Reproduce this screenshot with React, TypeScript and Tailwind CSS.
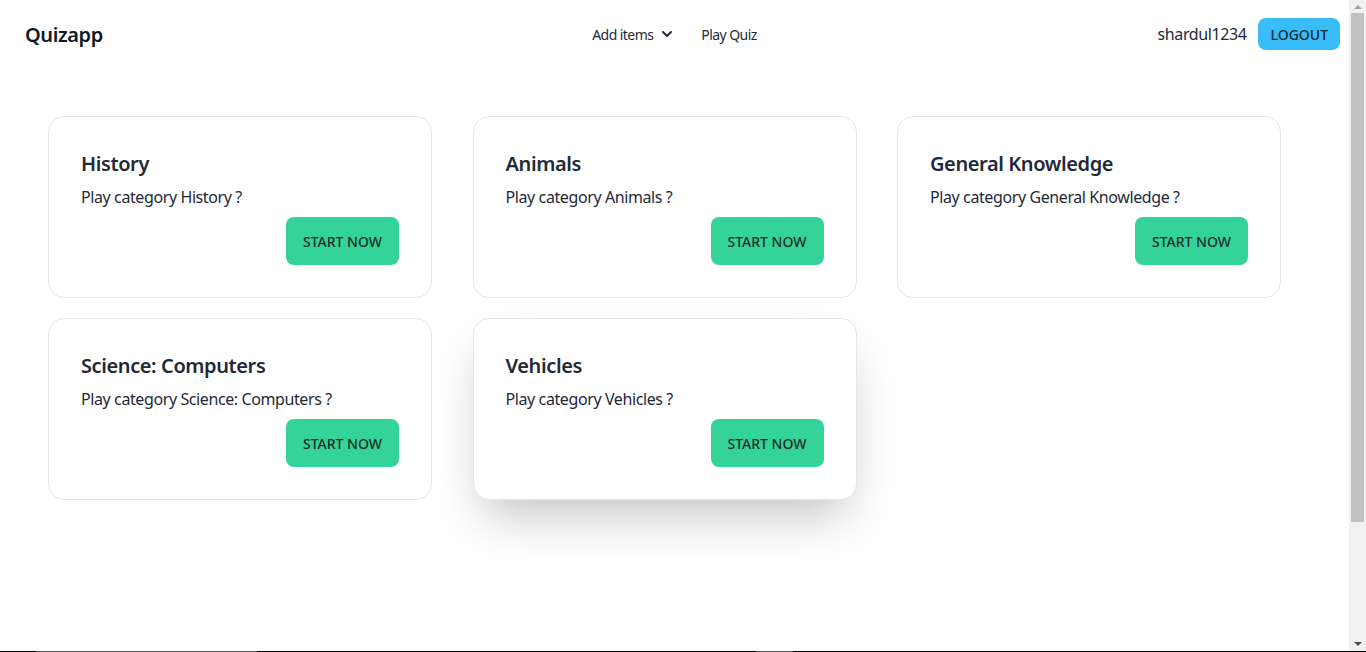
import { HiChevronDown } from 'react-icons/hi';

const categories = ['History', 'Animals', 'General Knowledge', 'Science: Computers', 'Vehicles'];

const CategoryCard = ({ name, raised }: { name: string; raised?: boolean }) => {
  return (
    <div
      className={
        'w-[384px] h-[182px] rounded-2xl border border-[#e5e6e6] bg-white px-8 pt-[33px] flex flex-col ' +
        (raised ? 'shadow-[0_25px_50px_-12px_rgba(0,0,0,0.25)]' : '')
      }
    >
      <h2 className="text-[20px] leading-7 font-semibold text-[#1f2937]">{name}</h2>
      <p className="mt-[7px] text-[16px] leading-6 text-[#1f2937]">Play category {name} ?</p>
      <div className="flex justify-end mt-2">
        <button className="h-12 px-[17px] rounded-lg bg-[#34d399] text-[14px] font-medium uppercase text-[#1a2e26] tracking-normal">
          Start now
        </button>
      </div>
    </div>
  );
};

const Scrollbar = () => (
  <aside className="w-[17px] bg-[#f1f1f1] flex flex-col items-center">
    <div className="h-[13px] flex items-center justify-center">
      <div className="w-0 h-0 border-x-[4px] border-x-transparent border-b-[4px] border-b-[#a3a3a3]" />
    </div>
    <div className="w-[13px] h-[509px] bg-[#c1c1c1] ml-[2px] mr-[2px]" />
    <div className="flex-1" />
    <div className="h-[14px] flex items-center justify-center">
      <div className="w-0 h-0 border-x-[4px] border-x-transparent border-t-[4px] border-t-[#505050]" />
    </div>
  </aside>
);

export default function App() {
  return (
    <div className="h-[652px] overflow-hidden flex flex-col bg-white font-['Noto_Sans',sans-serif] tracking-[-0.025em] text-[#1f2937]">
      <div className="flex-1 flex min-h-0">
        <main className="flex-1">
          <nav className="h-[68px] grid grid-cols-[1fr_auto_1fr] items-center px-[9px]">
            <a className="ml-[16px] text-[20px] font-semibold text-[#111827] pt-[2px]">Quizapp</a>
            <ul className="flex items-center gap-[24px] text-[14px] tracking-[-0.04em]">
              <li className="flex items-center gap-[4px]">
                Add items
                <HiChevronDown className="w-5 h-5" />
              </li>
              <li>Play Quiz</li>
            </ul>
            <div className="flex items-center justify-end gap-3">
              <span className="text-[16px]">shardul1234</span>
              <button className="h-8 px-3 rounded-lg bg-[#38bdf8] text-[14px] font-medium text-[#0c2a3a] tracking-normal">
                LOGOUT
              </button>
            </div>
          </nav>
          <div className="mt-[48px] pl-[48px] grid grid-cols-[repeat(3,384px)] gap-x-[40.5px] gap-y-5">
            {categories.map((c) => (
              <CategoryCard key={c} name={c} raised={c === 'Vehicles'} />
            ))}
          </div>
        </main>
        <Scrollbar />
      </div>
      <div className="h-px flex">
        <div className="w-[36px] bg-black" />
        <div className="w-[221px] bg-[#555]" />
        <div className="w-[499px] bg-black" />
        <div className="w-[37px] bg-[#555]" />
        <div className="flex-1 bg-black" />
      </div>
    </div>
  );
}
